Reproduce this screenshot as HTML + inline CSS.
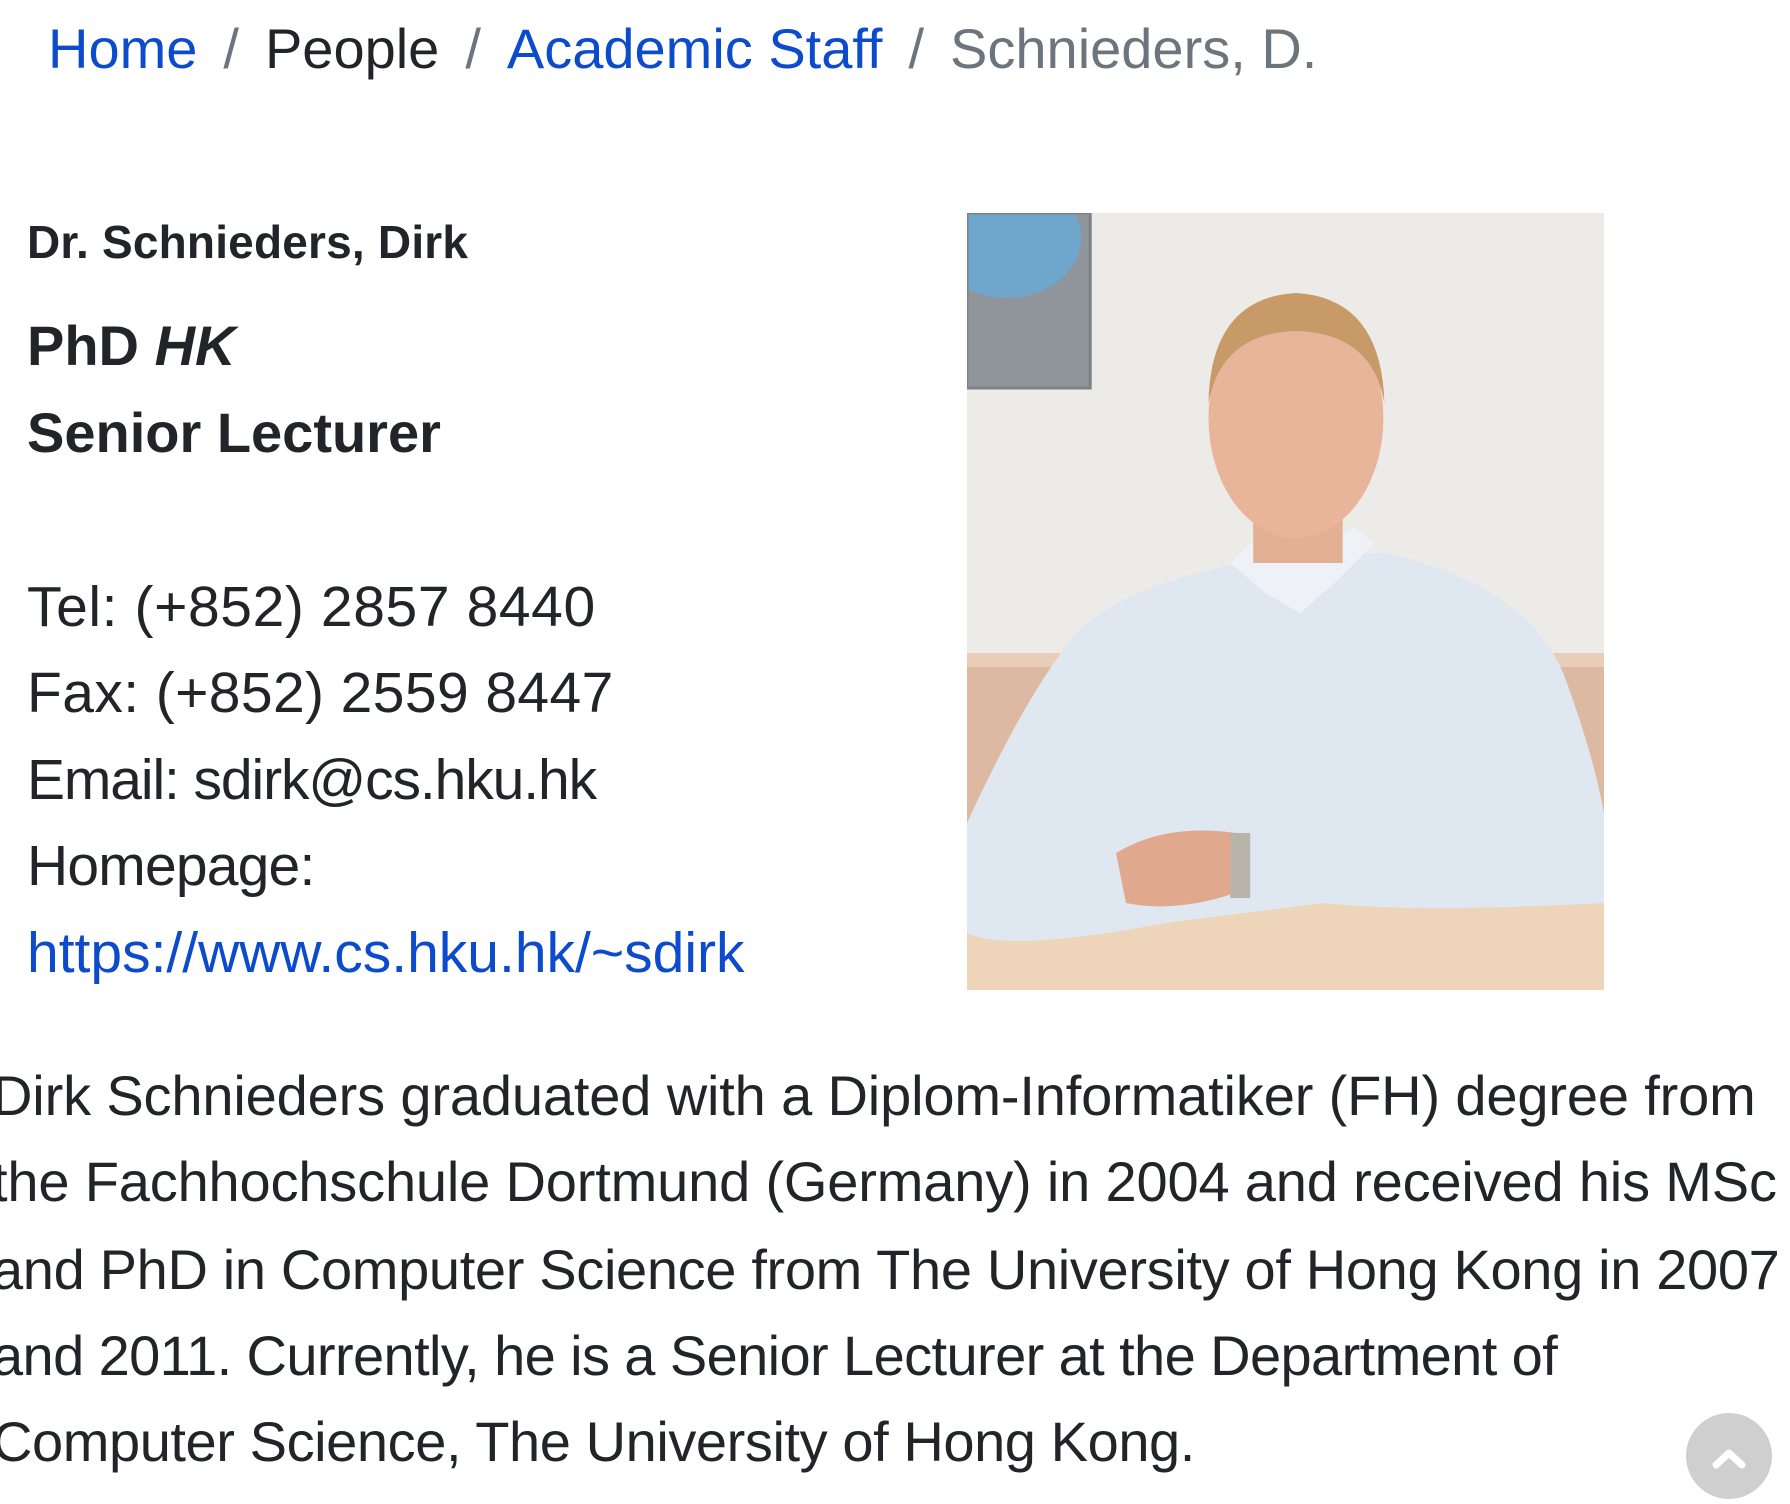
<!DOCTYPE html>
<html><head><meta charset="utf-8">
<style>
html,body{margin:0;padding:0;background:#fff;}
body{width:1790px;height:1476px;position:relative;overflow:hidden;font-family:"Liberation Sans",Arial,sans-serif;color:#212529;}
.l{position:absolute;white-space:nowrap;line-height:1;}
.bc{top:21px;left:48px;font-size:56px;}
.bc a{color:#0b4bcc;text-decoration:none;}
.bc .s{color:#6c757d;padding:0 26px;}
.bc .c{color:#6c757d;}
.b{font-weight:bold;}
.k{font-size:57px;left:27px;}
.p{font-size:56px;left:-8px;}
.photo{position:absolute;left:967px;top:213px;width:637px;height:777px;}
.top{position:absolute;left:1686px;top:1413px;width:86px;height:86px;border-radius:50%;background:#cfcfcf;}
</style></head><body>
<div class="l bc"><a>Home</a><span class="s">/</span>People<span class="s">/</span><a>Academic Staff</a><span class="s">/</span><span class="c">Schnieders, D.</span></div>

<div class="l b" style="top:219px;left:27px;font-size:46px;letter-spacing:0.2px;">Dr. Schnieders, Dirk</div>
<div class="l b" style="top:318px;left:27px;font-size:56px;">PhD <i>HK</i></div>
<div class="l b" style="top:405px;left:27px;font-size:56px;">Senior Lecturer</div>

<div class="l k" style="top:579px;letter-spacing:0.6px;">Tel: (+852) 2857 8440</div>
<div class="l k" style="top:665px;letter-spacing:0.4px;">Fax: (+852) 2559 8447</div>
<div class="l k" style="top:752px;letter-spacing:-1.1px;">Email: sdirk@cs.hku.hk</div>
<div class="l k" style="top:838px;letter-spacing:-0.8px;">Homepage:</div>
<div class="l k" style="top:925px;color:#0b4bcc;">https://www.cs.hku.hk/~sdirk</div>

<svg class="photo" viewBox="0 0 641 777" preserveAspectRatio="none">
<rect width="641" height="777" fill="#ecebe7"/>
<rect x="0" y="0" width="124" height="175" fill="#8f959b"/>
<ellipse cx="40" cy="25" rx="75" ry="60" fill="#6fa6cc"/>
<rect x="0" y="0" width="124" height="175" fill="none" stroke="#7c8288" stroke-width="3"/>
<rect x="0" y="440" width="641" height="250" fill="#dcb9a0"/>
<rect x="0" y="440" width="641" height="14" fill="#e8cdb8"/>
<path d="M0 777 L0 690 Q320 650 641 690 L641 777 Z" fill="#eed4b8"/>
<path d="M110 420 Q160 370 300 345 L420 340 Q560 370 600 460 Q630 540 641 600 L641 690 Q450 700 360 690 L200 710 Q40 740 0 720 L0 610 Q60 480 110 420 Z" fill="#dfe7f1"/>
<path d="M265 350 L300 380 L335 400 L370 370 L410 330 L390 315 L335 340 L285 330 Z" fill="#eef2f7"/>
<rect x="288" y="280" width="90" height="70" fill="#e3b096"/>
<ellipse cx="331" cy="205" rx="88" ry="120" fill="#e8b59a"/>
<path d="M243 190 Q245 85 331 80 Q417 85 420 190 Q408 120 331 118 Q256 120 243 190 Z" fill="#c79a68"/>
<path d="M150 640 Q200 610 270 620 L270 680 Q210 700 160 690 Z" fill="#e0a88c"/>
<rect x="265" y="620" width="20" height="65" fill="#b8b4ac"/>
</svg>

<div class="l p" style="top:1068px;letter-spacing:-0.15px;">Dirk Schnieders graduated with a Diplom-Informatiker (FH) degree from</div>
<div class="l p" style="top:1154px;letter-spacing:-0.17px;">the Fachhochschule Dortmund (Germany) in 2004 and received his MSc</div>
<div class="l p" style="top:1242px;letter-spacing:-0.34px;">and PhD in Computer Science from The University of Hong Kong in 2007</div>
<div class="l p" style="top:1328px;letter-spacing:-0.6px;">and 2011. Currently, he is a Senior Lecturer at the Department of</div>
<div class="l p" style="top:1414px;letter-spacing:-0.42px;">Computer Science, The University of Hong Kong.</div>

<div class="top"><svg width="86" height="86" viewBox="0 0 86 86"><path d="M30 52 L43 40 L56 52" fill="none" stroke="#fff" stroke-width="7" stroke-linecap="round" stroke-linejoin="round"/></svg></div>
</body></html>
